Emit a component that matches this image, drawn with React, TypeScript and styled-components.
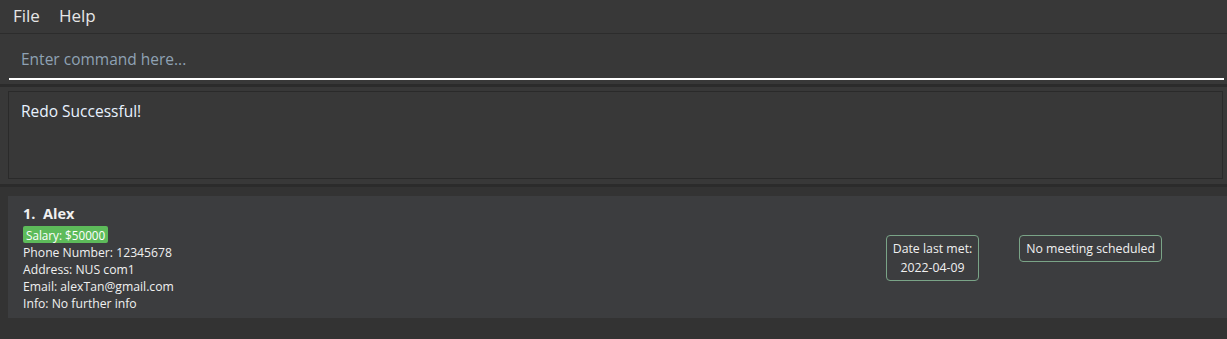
import React from "react";
import styled, { createGlobalStyle } from "styled-components";

const Global = createGlobalStyle`
  html, body { margin: 0; padding: 0; background: #333333; }
  body { font-family: "Open Sans", "Noto Sans", sans-serif; }
  * { box-sizing: border-box; }
`;

const Window = styled.div`
  width: 1227px;
  height: 339px;
  display: flex;
  flex-direction: column;
  background: #333333;
  overflow: hidden;
`;

const MenuBar = styled.div`
  height: 34px;
  display: flex;
  align-items: center;
  gap: 19px;
  padding: 0 0 2px 13px;
  background: #383838;
  border-bottom: 1px solid #2c2c2c;
`;

const MenuItem = styled.span`
  font-size: 17px;
  color: #e6e6e6;
`;

const CommandPane = styled.div`
  height: 53px;
  padding: 11px 3px 0 9px;
  background: #383838;
  border-bottom: 3px solid #2b2b2b;
`;

const CommandInput = styled.div`
  height: 35px;
  border-bottom: 2px solid #ffffff;
  padding: 3px 0 0 12px;
  font-size: 15.5px;
  color: #8fa2b4;
`;

const ResultPane = styled.div`
  height: 97px;
  padding: 4px 4px 5px 8px;
  background: #383838;
`;

const ResultBox = styled.div`
  height: 100%;
  border: 1px solid #2a2a2a;
  padding: 8px 12px;
  font-size: 15.5px;
  color: #e8f2ff;
`;

const Divider = styled.div`
  height: 3px;
  background: #2b2b2b;
`;

const ListArea = styled.div`
  flex: 1;
  padding: 9px 0 0 8px;
  background: #333333;
`;

const Card = styled.div`
  height: 122px;
  background: #3c3d3f;
  display: flex;
  align-items: flex-start;
  padding: 8px 65px 0 15px;
`;

const Details = styled.div`
  flex: 1;
  display: flex;
  flex-direction: column;
`;

const Name = styled.div`
  font-size: 14.5px;
  font-weight: 700;
  color: #f0f0f0;
  line-height: 20px;
  white-space: pre;
`;

const Tag = styled.span`
  align-self: flex-start;
  display: inline-flex;
  align-items: center;
  height: 17px;
  background: #5dbb5a;
  color: #ffffff;
  font-size: 11.7px;
  padding: 0 3px;
  border-radius: 2px;
  margin: 2px 0 1px;
`;

const Field = styled.div`
  font-size: 12.2px;
  line-height: 17px;
  color: #f0f0f0;
`;

const Badges = styled.div`
  display: flex;
  align-items: flex-start;
  gap: 40px;
  margin-top: 31px;
`;

const Badge = styled.div`
  border: 1px solid #7aa487;
  border-radius: 4px;
  padding: 3px 6px;
  font-size: 12.3px;
  line-height: 19px;
  color: #f0f0f0;
  text-align: center;
`;

export default function App() {
  return (
    <>
      <Global />
      <Window>
        <MenuBar>
          <MenuItem>File</MenuItem>
          <MenuItem>Help</MenuItem>
        </MenuBar>
        <CommandPane>
          <CommandInput>Enter command here...</CommandInput>
        </CommandPane>
        <ResultPane>
          <ResultBox>Redo Successful!</ResultBox>
        </ResultPane>
        <Divider />
        <ListArea>
          <Card>
            <Details>
              <Name>{"1.  Alex"}</Name>
              <Tag>Salary: $50000</Tag>
              <Field>Phone Number: 12345678</Field>
              <Field>Address: NUS com1</Field>
              <Field>Email: alexTan@gmail.com</Field>
              <Field>Info: No further info</Field>
            </Details>
            <Badges>
              <Badge>
                Date last met:
                <br />
                2022-04-09
              </Badge>
              <Badge>No meeting scheduled</Badge>
            </Badges>
          </Card>
        </ListArea>
      </Window>
    </>
  );
}
